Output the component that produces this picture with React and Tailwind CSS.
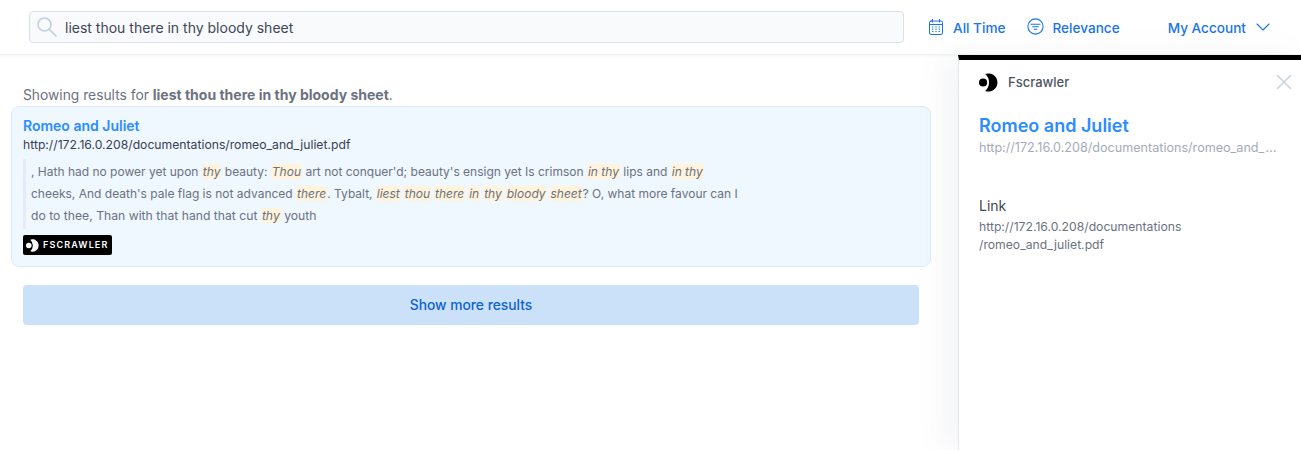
import React from "react";
import { ChevronDown, X } from "lucide-react";

const FONT = "font-['Inter','Noto_Sans',sans-serif]";

const Logo = ({ size = 20, fill = "#000" }) => (
  <svg width={size} height={size} viewBox="0 0 20 20">
    <circle cx="4.3" cy="10" r="4.3" fill={fill} />
    <path d="M6.5 1A9.6 9.6 0 1 1 6.5 19 12 12 0 0 0 6.5 1Z" fill={fill} />
  </svg>
);

const SearchIcon = () => (
  <svg width="20" height="20" viewBox="0 0 20 20" fill="none" stroke="#c3cfdf" strokeWidth="1.6" strokeLinecap="round">
    <circle cx="7.5" cy="7.5" r="6.5" />
    <path d="M12.4 12.4 19 19" />
  </svg>
);

const SortIcon = () => (
  <svg width="17" height="17" viewBox="0 0 17 17" fill="none" stroke="#1a73e8" strokeWidth="1.1" strokeLinecap="round">
    <circle cx="8.5" cy="8.5" r="7.6" />
    <path d="M4 6.3h9M5.6 8.8h5.8M7.2 11.3h2.6" />
  </svg>
);

const CalendarIcon = () => (
  <svg width="14" height="16" viewBox="0 0 14 16" fill="none" stroke="#1a73e8" strokeWidth="1" strokeLinecap="round">
    <rect x="0.5" y="2" width="13" height="13.5" rx="1.5" />
    <path d="M0.5 5.5h13M3.5 0.5v2.5M10.5 0.5v2.5" />
    <path d="M3 8h1.4M6.3 8h1.4M9.6 8h1.4M3 10.2h1.4M6.3 10.2h1.4M9.6 10.2h1.4M3 12.4h1.4M6.3 12.4h1.4M9.6 12.4h1.4" strokeLinecap="butt" />
  </svg>
);

const Hl = ({ children }) => (
  <em className="rounded-[3px] bg-[#fff3dc] px-[1px] text-[#6b7280]">{children}</em>
);

const PHRASE = ["liest", "thou", "there", "in", "thy", "bloody", "sheet"];

const App = () => {
  return (
    <div className={`${FONT} flex h-[450px] w-full flex-col overflow-hidden bg-white`}>
      {/* Header */}
      <header className="relative z-20 flex h-[55px] shrink-0 items-center border-b border-[#eceff3] pl-[29px] pr-[26px] shadow-[0_1px_3px_rgba(0,0,0,0.04)]">
        <div className="flex h-8 w-[875px] items-center rounded border border-[#d9e0ea] bg-[#f8fafc] pl-[7px]">
          <SearchIcon />
          <span className="ml-[8px] pt-[2px] text-sm text-[#3f4654]">liest thou there in thy bloody sheet</span>
        </div>
        <div className="ml-[25px] flex items-center text-[13.6px] font-medium text-[#1a73e8]">
          <CalendarIcon />
          <span className="ml-[10px] pt-[2px]">All Time</span>
        </div>
        <div className="ml-[22px] flex items-center text-[13.6px] font-medium text-[#1a73e8]">
          <SortIcon />
          <span className="ml-[8px] pt-[2px]">Relevance</span>
        </div>
        <div className="ml-auto flex items-center text-[13.6px] font-medium text-[#1a73e8]">
          <span className="pt-[2px]">My Account</span>
          <ChevronDown size={24} strokeWidth={1.1} className="ml-[5px]" />
        </div>
      </header>

      <div className="flex min-h-0 flex-1">
        {/* Results */}
        <main className="w-[958px] shrink-0 pl-[11px] pr-[27px]">
          <p className="ml-3 mt-[31px] text-[13.8px] leading-[17px] text-[#6b7280]">
            Showing results for <strong className="text-[14px] font-bold">liest thou there in thy bloody sheet</strong>.
          </p>
          <article className="mt-[2px] h-[161px] w-[920px] rounded-lg border border-[#dbeafe] bg-[#eff7ff] px-[11px] pt-[9px]">
            <h3 className="text-sm font-semibold leading-[20px] text-[#2b8cff]">Romeo and Juliet</h3>
            <p className="text-[12.2px] leading-[18px] text-[#374151]">http://172.16.0.208/documentations/romeo_and_juliet.pdf</p>
            <blockquote className="mt-[5px] h-[70px] w-[730px] border-l-[3px] border-[#e5ecf5] pl-[5px] pt-[2px] text-xs leading-[22px] text-[#6b7280]">
              , Hath had no power yet upon <Hl>thy</Hl> beauty: <Hl>Thou</Hl> art not conquer'd; beauty's ensign yet Is crimson <Hl>in thy</Hl> lips and <Hl>in thy</Hl>
              <br />
              cheeks, And death's pale flag is not advanced <Hl>there</Hl>. Tybalt,{" "}
              {PHRASE.map((word, i) => (
                <React.Fragment key={i}>
                  <em className="rounded-[3px] bg-[#fff3dc] px-[0.8px] text-[#6b7280]">{word}</em>
                  {i < PHRASE.length - 1 ? " " : ""}
                </React.Fragment>
              ))}
              ? O, what more favour can I
              <br />
              <span className="text-[12.2px]">
                do to thee, Than with that hand that cut <Hl>thy</Hl> youth
              </span>
            </blockquote>
            <div className="mt-[6px] flex h-5 w-[89px] items-center rounded-[2px] bg-black pl-[3px]">
              <Logo size={13} fill="#fff" />
              <span className="ml-[4px] text-[9px] font-semibold tracking-[0.127em] text-white">FSCRAWLER</span>
            </div>
          </article>
          <button className="ml-3 mt-[18px] flex h-10 w-[896px] items-center justify-center rounded bg-[#cbe1fa] text-[13.8px] font-medium text-[#0b63ce]">
            Show more results
          </button>
        </main>

        {/* Detail panel */}
        <aside className="relative min-w-0 flex-1 border-l border-[#e5e7eb] border-t-[5px] border-t-black pl-[20px] pr-[10px] shadow-[-12px_0_30px_rgba(100,116,139,0.08)]">
          <div className="mt-[13px] flex h-[19px] items-center">
            <Logo size={19} />
            <span className="ml-[10px] text-[13px] font-medium text-[#4b5563]">Fscrawler</span>
            <X size={26} strokeWidth={1.4} className="-my-1 ml-auto -mr-[6px] -translate-y-[1px] text-[#c8d3e0]" />
          </div>
          <h2 className="mt-[22px] text-lg font-semibold leading-[24px] text-[#2b8cff]">Romeo and Juliet</h2>
          <p className="mt-[2px] truncate pr-[14px] text-[12.6px] leading-[16px] text-[#a3abb8]">http://172.16.0.208/documentations/romeo_and_juliet.pdf</p>
          <h4 className="mt-[41px] text-sm leading-[18px] text-[#3f4654]">Link</h4>
          <p className="mt-[3px] text-[12.2px] leading-[18px] text-[#6b7280]">
            http://172.16.0.208/documentations
            <br />
            /romeo_and_juliet.pdf
          </p>
        </aside>
      </div>
    </div>
  );
};

export default App;
